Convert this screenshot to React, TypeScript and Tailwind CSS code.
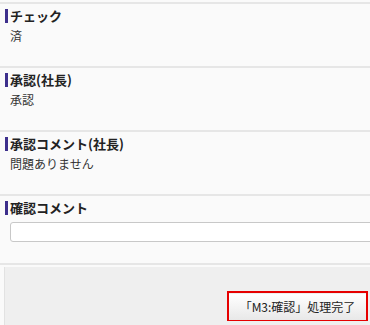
const font = { fontFamily: '"Noto Sans CJK JP", "Noto Sans", sans-serif' };

const items = [
    { label: "チェック", value: "済" },
    { label: "承認(社長)", value: "承認" },
    { label: "承認コメント(社長)", value: "問題ありません" },
];

function Label({ children }: { children: string }) {
    return (
        <div className="ml-[5px] border-l-[3px] border-[#3d2f8c] pl-[2px] text-[13px] font-bold leading-[14px] text-[#222]">
            {children}
        </div>
    );
}

export default function App() {
    return (
        <div
            className="h-[325px] w-[370px] overflow-hidden bg-[#fafafa] pt-[2px]"
            style={font}
        >
            {items.map((item) => (
                <div key={item.label} className="h-[64px] border-t-2 border-[#e6e6e6] pt-[5px]">
                    <Label>{item.label}</Label>
                    <p className="mt-[5px] pl-[10px] text-[12px] leading-[16px] text-[#333]">
                        {item.value}
                    </p>
                </div>
            ))}

            <div className="h-[69px] border-t-2 border-[#e6e6e6] pt-[5px]">
                <Label>確認コメント</Label>
                <input
                    type="text"
                    className="mt-[7px] ml-[10px] h-[20px] w-[370px] rounded-[3px] border border-[#c8c8c8] bg-white"
                />
            </div>

            <div className="border-t-2 border-[#e6e6e6] pt-[2px]">
                <div className="ml-[4px] flex h-[60px] justify-end border-l border-[#e2e2e2] bg-[#efefef] pt-[24px] pr-[2px]">
                    <div className="h-[30px] w-[141px] border-2 border-[#e60000]">
                        <button
                            type="button"
                            className="h-full w-full bg-gradient-to-b from-white to-[#e8e8e8] text-[12px] text-[#222]"
                            style={font}
                        >
                            「M3:確認」処理完了
                        </button>
                    </div>
                </div>
            </div>
        </div>
    );
}
